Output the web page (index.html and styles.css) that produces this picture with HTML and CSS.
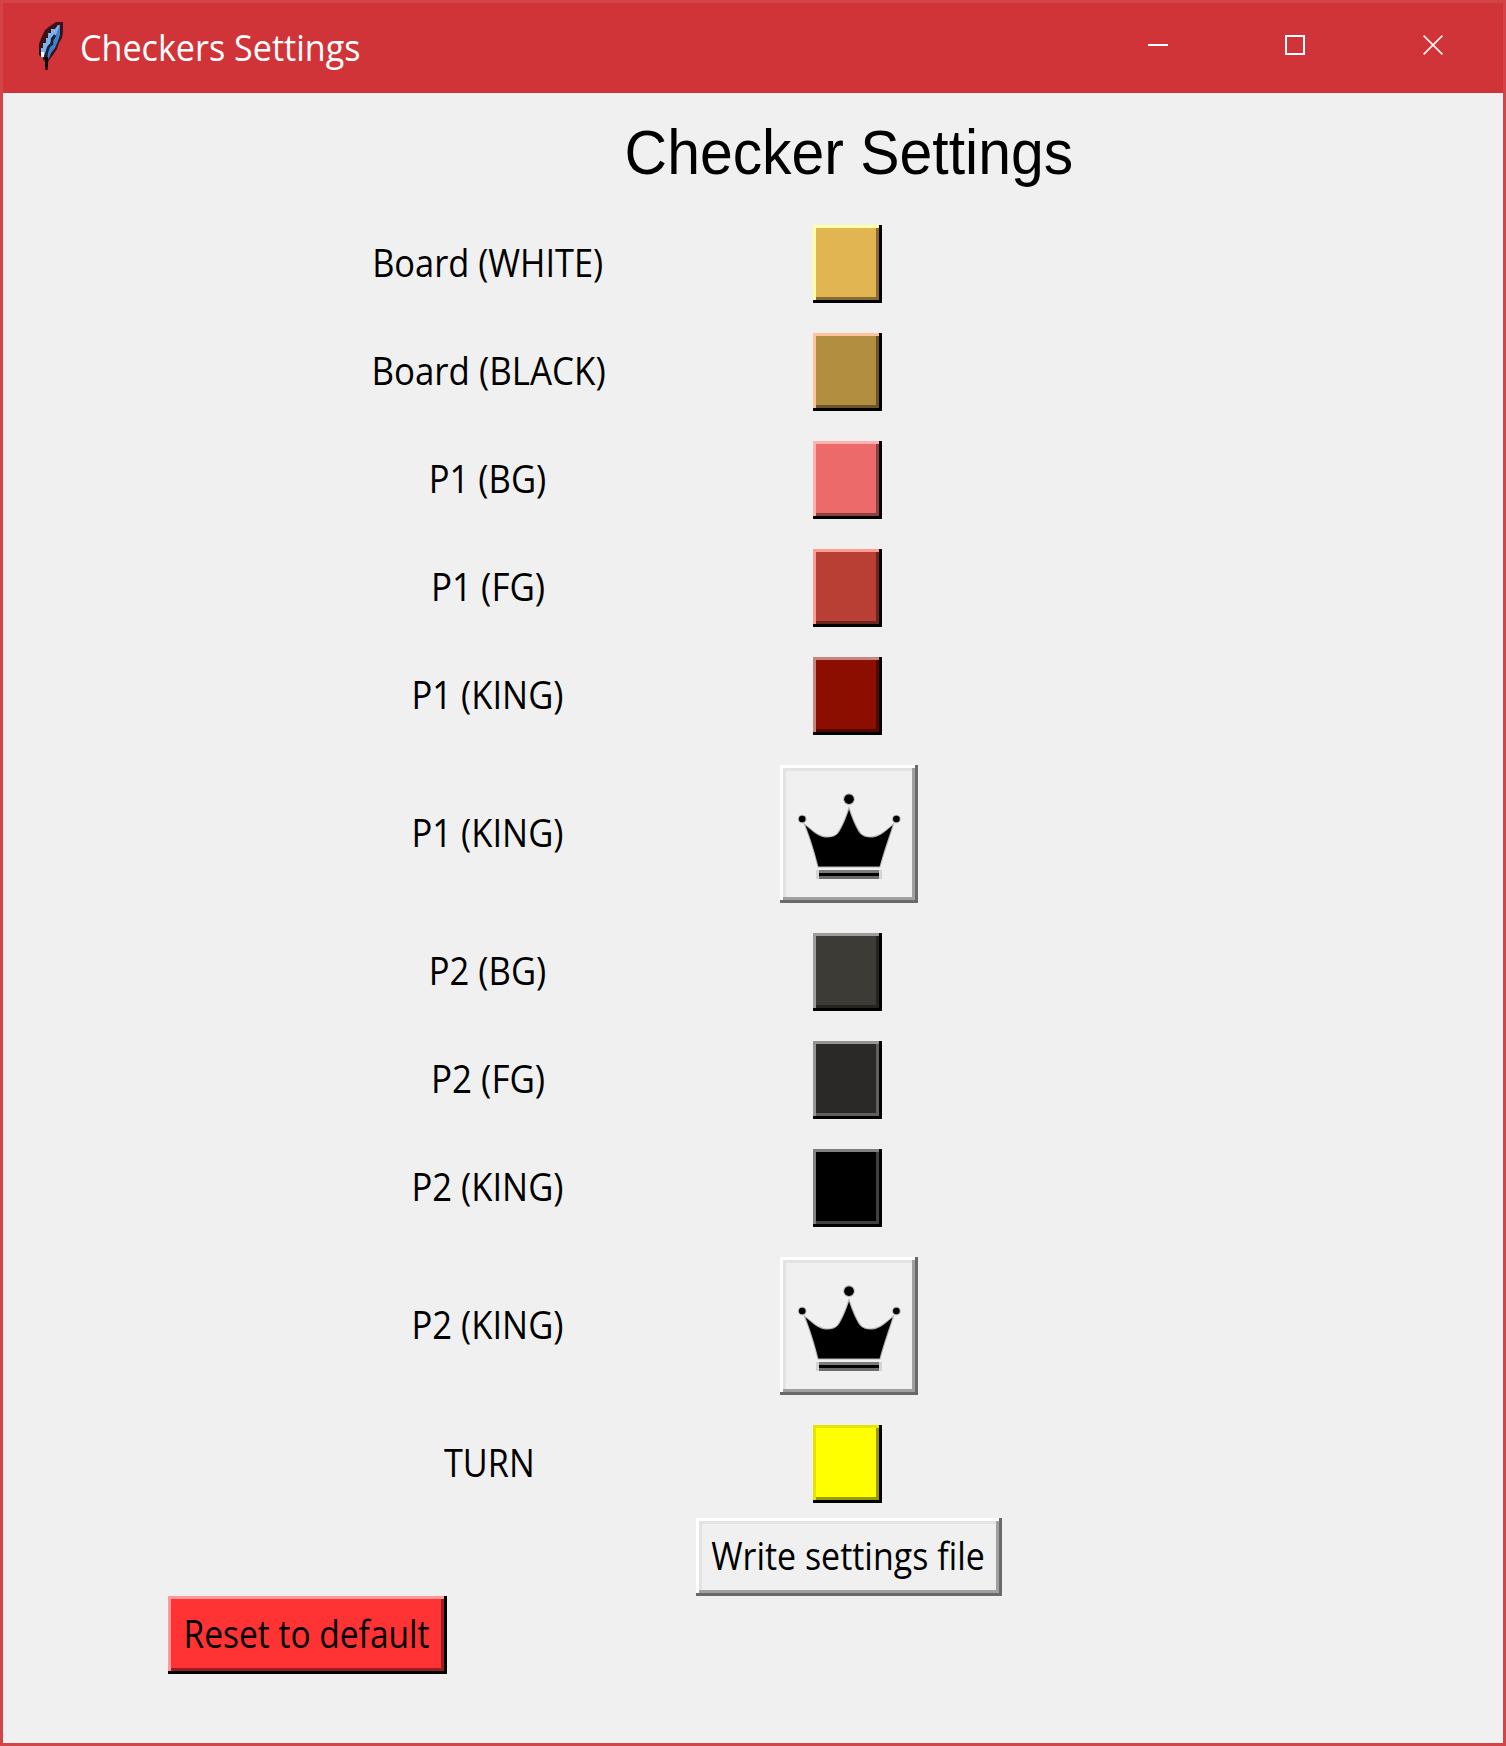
FILE: index.html
```html
<!DOCTYPE html>
<html lang="en">
<head>
<meta charset="utf-8">
<title>Checkers Settings</title>
<link rel="stylesheet" href="styles.css">
</head>
<body>
<svg class="defs" width="0" height="0" aria-hidden="true">
  <symbol id="crown" viewBox="0 0 46 46">
    <g fill="#000" stroke="#000" stroke-opacity=".25" stroke-width=".7">
      <circle cx="23" cy="11.4" r="1.6"/>
      <circle cx="7.4" cy="18" r="1.1"/>
      <circle cx="38.8" cy="18" r="1.1"/>
      <path d="M23 14.8C23.9 17.5 25.2 21 26.8 23C28.5 24.6 31.5 24.4 33.4 23.3C35 22.4 36.3 21.2 37.5 20.2C36.3 24 34.5 29 33.2 33.8H12.8C11.6 29 10 24 8.5 20.2C9.8 21.2 11 22.4 12.6 23.3C14.5 24.4 17.5 24.6 19.2 23C20.8 21 22.1 17.5 23 14.8Z"/>
    </g>
    <g shape-rendering="crispEdges">
      <path fill="#7c7c7c" d="M13 35h20v1H13z"/>
      <path fill="#000" d="M13 36h20v1H13z"/>
      <path fill="#6c6c6c" d="M13 37h20v1H13z"/>
      <path fill="#d4d4d4" d="M12 35h1v3h-1zM33 35h1v3h-1z"/>
    </g>
  </symbol>
</svg>
<div class="window">
  <header class="titlebar">
    <svg class="feather" viewBox="0 0 26 50" width="26" height="50">
      <path fill="#2a1014" fill-opacity=".9" d="M18 1h7v10l-1 6-3 5-2 6-4 6-4 5-1 3v7H7v-8l-2-3-4-4V23l3-8 3-6 5-4z"/>
      <path fill="#3f7fd0" d="M22 4v10l-2 6-3 7-4 5-2 5-3 2 1-8 3-5 2-5 3-4 2-6z"/>
      <path fill="#7fb2ea" d="M20 4l2 0-2 5-2 5-4 2-2 7-3 3-2 7-2 3-1 2-1-4v-7h2v-5h3v-5h2v-5h3v-4h4z"/>
      <path fill="none" stroke="#14233a" stroke-width="2.4" d="M17 14l-3 4v5l-3 2-2 6-1 7"/>
      <path fill="#fff" d="M3 31h3v5H3z"/>
      <path fill="#000" d="M7 36h3v10H7z"/>
    </svg>
    <h1 class="caption">Checkers Settings</h1>
    <div class="controls">
      <svg width="20" height="20" viewBox="0 0 20 20"><path fill="#fff" d="M0 9h20v2H0z"/></svg>
      <svg width="20" height="20" viewBox="0 0 20 20"><path fill="none" stroke="#fff" stroke-width="2" d="M1 1h18v18H1z"/></svg>
      <svg class="close" width="20" height="20" viewBox="0 0 20 20"><path fill="none" stroke="#fff" stroke-opacity=".93" stroke-width="1.7" d="M.6.6l18.8 18.8M19.4.6L.6 19.4"/></svg>
    </div>
  </header>
  <main class="content">
    <div class="grid">
      <h2 class="heading">Checker Settings</h2>
      <span class="label white">Board (WHITE)</span><button class="raised swatch board-white"></button>
      <span class="label black">Board (BLACK)</span><button class="raised swatch board-black"></button>
      <span class="label">P1 (BG)</span><button class="raised swatch p1-bg"></button>
      <span class="label fg">P1 (FG)</span><button class="raised swatch p1-fg"></button>
      <span class="label">P1 (KING)</span><button class="raised swatch p1-king"></button>
      <span class="label">P1 (KING)</span><button class="raised piece"><svg width="138" height="138"><use href="#crown"/></svg></button>
      <span class="label">P2 (BG)</span><button class="raised swatch p2-bg"></button>
      <span class="label fg">P2 (FG)</span><button class="raised swatch p2-fg"></button>
      <span class="label">P2 (KING)</span><button class="raised swatch p2-king"></button>
      <span class="label">P2 (KING)</span><button class="raised piece"><svg width="138" height="138"><use href="#crown"/></svg></button>
      <span class="label turn">TURN</span><button class="raised swatch turn-color"></button>
      <button class="raised action write"><span>Write settings file</span></button>
    </div>
    <button class="raised action reset"><span>Reset to default</span></button>
  </main>
</div>
</body>
</html>
```
FILE: styles.css
```css
* { box-sizing: border-box; }
body { margin: 0; font-family: "Open Sans", "Noto Sans", sans-serif; color: #000; }
.defs { display: none; }
.window {
  width: 1506px; height: 1746px;
  border: 3px solid #d34449;
  background: #f0f0f0;
}
.titlebar {
  display: flex; align-items: center;
  height: 90px; padding: 0 60px 0 35px;
  background: #d03438;
}
.feather { flex: none; margin-top: -4px; }
.caption {
  margin: -2px 0 0 16px;
  font-size: 37px; font-weight: 400; line-height: 50px; color: #fff;
  white-space: nowrap;
  transform: scaleX(.922); transform-origin: 0 50%;
}
.controls { display: flex; gap: 117px; margin: -6px 0 0 auto; }
.controls svg { display: block; }
.controls .close { margin-left: 1px; }

.content { display: flex; flex-direction: column; align-items: flex-start; }
.grid {
  display: grid;
  grid-template-columns: 361px 360px;
  row-gap: 30px;
  align-items: center; justify-items: center;
  margin-left: 305px;
}
.heading {
  grid-column: 2;
  margin: 0; height: 102px; padding-top: 17px;
  font: 400 63px/84px "Liberation Sans", Arial, sans-serif;
  white-space: nowrap;
  transform: scaleX(.935);
}
.label {
  margin-right: 2px; padding-bottom: 5px;
  font-size: 38px; line-height: 52px;
  white-space: nowrap;
  transform: scaleX(.91);
}
.label.white { transform: scaleX(.905); }
.label.black { margin-right: 0; transform: scaleX(.918); }
.label.fg { margin-right: 0; transform: scaleX(.92); }
.label.turn { margin-right: -2px; transform: scaleX(.9); }

/* Bevelled widget: outer light/edge lines with a second inner pair */
.raised {
  --face: #f0f0f0; --light: #fff; --inner: var(--face); --shade: #a0a0a0; --edge: #696969;
  display: block; padding: 0; border: 0;
  font: inherit; color: #000;
  background: var(--face);
  box-shadow:
    inset -3px -3px 0 var(--edge),
    inset 3px 3px 0 var(--light),
    inset -6px -6px 0 var(--shade),
    inset 6px 6px 0 var(--inner);
}
.swatch { --edge: #000; width: 69px; height: 78px; margin-right: 3px; }
.board-white { --face: #e2b553; --light: #ffffa6; --shade: #876c31; }
.board-black { --face: #b28e40; --light: #ffc49c; --shade: #6a5526; }
.p1-bg { --face: #ec6b6a; --light: #ffb0b0; --shade: #8d403f; }
.p1-fg { --face: #b93f34; --light: #ff9b96; --shade: #6f261f; }
.p1-king { --face: #8b0e00; --light: #c5867f; --shade: #530800; }
.p2-bg { --face: #3d3b36; --light: #9e9d9b; --shade: #252420; }
.p2-fg { --face: #2b2927; --light: #959493; --shade: #605f5d; }
.p2-king { --face: #000; --light: #808080; --shade: #404040; }
.turn-color { --face: #ff0; --light: #e5e500; --shade: #999900; }
.piece { --inner: #e3e3e3; width: 138px; height: 138px; }
.piece svg { display: block; }
.action { height: 78px; font-size: 38px; line-height: 52px; white-space: nowrap; }
.action span { display: block; margin: 0 -20px; padding-bottom: 5px; }
.write { --inner: #e3e3e3; grid-column: 2; width: 306px; margin-top: -15px; }
.write span { margin-right: -18px; transform: scaleX(.893); }
.reset { --face: #f33; --light: #ff9999; --shade: #991f1f; --edge: #000; width: 279px; margin-left: 165px; }
.reset span { margin-right: -18px; transform: scaleX(.882); }
```
